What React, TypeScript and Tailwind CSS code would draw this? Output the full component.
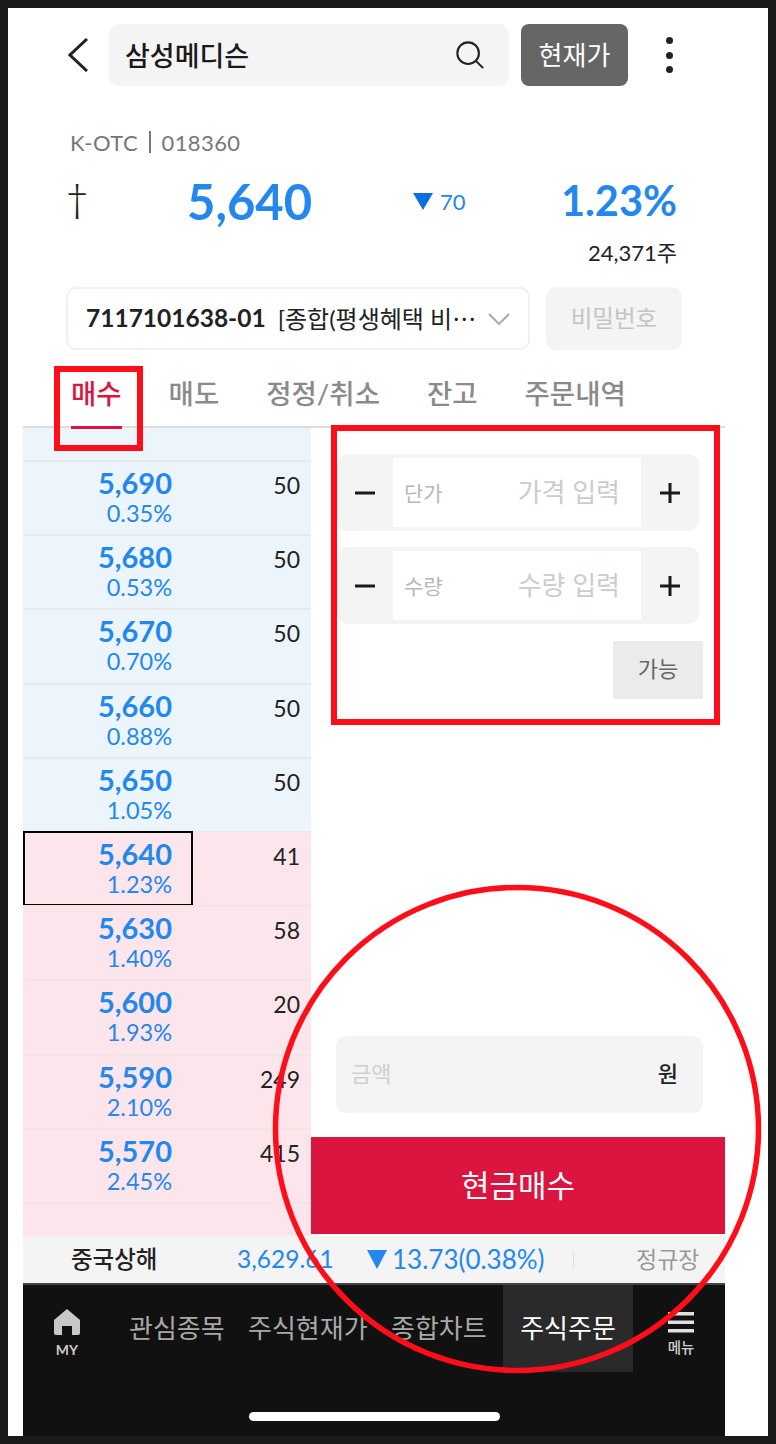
const KR = "font-['Lato','Noto_Sans_CJK_KR',sans-serif]";

const rows = [
  { p: '5,690', r: '0.35%', q: '50', up: true },
  { p: '5,680', r: '0.53%', q: '50', up: true },
  { p: '5,670', r: '0.70%', q: '50', up: true },
  { p: '5,660', r: '0.88%', q: '50', up: true },
  { p: '5,650', r: '1.05%', q: '50', up: true },
  { p: '5,640', r: '1.23%', q: '41', up: false, sel: true },
  { p: '5,630', r: '1.40%', q: '58', up: false },
  { p: '5,600', r: '1.93%', q: '20', up: false },
  { p: '5,590', r: '2.10%', q: '249', up: false },
  { p: '5,570', r: '2.45%', q: '415', up: false },
];

function Stepper({ label, hint }: { label: string; hint: string }) {
  return (
    <div className="flex h-[77px] w-[362px] items-center rounded-[10px] bg-[#f4f4f4] py-1">
      <div className="flex w-14 justify-center">
        <svg width="20" height="4" viewBox="0 0 20 4"><path d="M0 2h20" stroke="#1a1a1a" strokeWidth="3" /></svg>
      </div>
      <div className="flex h-full w-[248px] items-center justify-between bg-white pl-[11px] pr-[21px]">
        <span className="text-[21px] text-[#b8b8b8]">{label}</span>
        <span className="text-[26px] text-[#cccccc]">{hint}</span>
      </div>
      <div className="flex w-[58px] justify-center">
        <svg width="20" height="20" viewBox="0 0 20 20"><path d="M0 10h20M10 0v20" stroke="#1a1a1a" strokeWidth="3" /></svg>
      </div>
    </div>
  );
}

export default function App() {
  return (
    <div className={`relative h-[1444px] w-[776px] overflow-hidden bg-[#1a1a1a] p-2 ${KR}`}>
      <div className="flex h-full flex-col bg-white">
        {/* header */}
        <div className="mt-4 flex h-[62px] shrink-0 items-center pl-[60px]">
          <svg width="20" height="34" viewBox="0 0 20 34" fill="none" className="mr-[21px]">
            <path d="M19 1 2 17l17 16" stroke="#222" strokeWidth="3" />
          </svg>
          <div className="flex h-full w-[400px] items-center justify-between rounded-[10px] bg-[#f4f4f4] pl-4 pr-[24px]">
            <span className="text-[27px] font-medium leading-none text-[#1a1a1a]">삼성메디슨</span>
            <svg width="30" height="30" viewBox="0 0 32 32" fill="none">
              <circle cx="14" cy="14" r="11.5" stroke="#222" strokeWidth="2.2" />
              <path d="m22 22 8 8" stroke="#222" strokeWidth="2.2" />
            </svg>
          </div>
          <div className="ml-3 flex h-full w-[107px] items-center justify-center rounded-[8px] bg-[#666666] text-[26px] text-white">현재가</div>
          <div className="ml-[38px] flex h-[36px] flex-col justify-between">
            <span className="h-[7px] w-[7px] rounded-full bg-[#222]" />
            <span className="h-[7px] w-[7px] rounded-full bg-[#222]" />
            <span className="h-[7px] w-[7px] rounded-full bg-[#222]" />
          </div>
        </div>

        {/* symbol */}
        <div className="mt-[41px] flex h-[30px] items-center pl-[62px] text-[22px] tracking-[0.4px] text-[#777777]">
          K-OTC<span className="mx-[11px] h-[22px] w-[1.5px] bg-[#777]" />018360
        </div>
        <div className="mt-[14px] flex h-[60px] items-center pl-[55px] pr-[91px]">
          <span className="flex w-[124px] justify-start pl-[3px] font-['Open_Sans',sans-serif] text-[46px] font-light leading-none text-[#222]">†</span>
          <span className="w-[226px] text-[49px] font-bold leading-none text-[#2288ee]">5,640</span>
          <span className="flex items-center gap-[7px] text-[22px] text-[#2288ee]">
            <span className="h-0 w-0 border-x-[10px] border-t-[17px] border-x-transparent border-t-[#0a6fe0]" />70
          </span>
          <span className="ml-auto text-[41.5px] font-bold leading-none text-[#2288ee]">1.23%</span>
        </div>
        <div className="mt-[7px] flex h-[28px] items-center justify-end pr-[91px] text-[22px] text-[#222]">24,371주</div>

        {/* account */}
        <div className="mt-[21px] flex h-[63px] shrink-0 pl-[58px]">
          <div className="flex w-[464px] items-center rounded-[10px] border-2 border-[#f0f0f0] pl-[18px] pr-[18px]">
            <span className="text-[24.5px] font-bold leading-none text-[#222]">7117101638-01</span>
            <span className="ml-[12px] flex-1 whitespace-nowrap text-[24px] text-[#222]">[종합(평생혜택 비⋯</span>
            <svg width="22" height="12" viewBox="0 0 22 12" fill="none"><path d="m1 1 10 10 10-10" stroke="#aaa" strokeWidth="2" /></svg>
          </div>
          <div className="ml-4 flex w-[136px] items-center justify-center rounded-[10px] bg-[#f4f4f4] text-[23.5px] text-[#c4c4c4]">비밀번호</div>
        </div>

        {/* main */}
        <div className="ml-[15px] flex w-[702px] flex-1 flex-col">
          <div className="mt-[16px] flex h-[62px] shrink-0 items-start gap-[47px] border-b-2 border-[#dddddd] pl-[48px] pt-[8px] text-[27.5px] font-medium leading-[40px] text-[#8a8a8a]">
            <span className="relative h-[53px] text-[#dc1440]">매수<span className="absolute bottom-0 left-0 h-[3px] w-full translate-y-[2px] bg-[#dc1440]" /></span>
            <span>매도</span>
            <span>정정/취소</span>
            <span>잔고</span>
            <span>주문내역</span>
          </div>
          <div className="flex h-[808px] shrink-0">
            {/* book */}
            <div className="flex w-[288px] flex-col">
              <div className="h-[32px] bg-[#edf5fc]" />
              {rows.map((r) => (
                <div
                  key={r.p}
                  className={`flex h-[74.2px] border-t-2 ${r.up ? 'border-[#e6e8ea] bg-[#edf5fc]' : 'border-[#f3e4e7] bg-[#fde6eb]'}`}
                >
                  <div className={`flex w-[170px] flex-col items-end pt-[4px] ${r.sel ? '-mt-[2px] h-[75px] border-2 border-black pr-[19px]' : 'pr-[21px]'}`}>
                    <span className="text-[29px] font-bold leading-[34px] text-[#2288ee]">{r.p}</span>
                    <span className="text-[23.5px] leading-[27px] text-[#2288ee]">{r.r}</span>
                  </div>
                  <div className="flex-1 pr-[11px] pt-[8px] text-right text-[23px] leading-[30px] text-[#222]">{r.q}</div>
                </div>
              ))}
              <div className="flex-1 border-t-2 border-[#f3e4e7] bg-[#fde6eb]" />
            </div>
            {/* order */}
            <div className="flex w-[414px] flex-col">
              <div className="flex flex-col gap-4 pl-[26px] pt-[26px]">
                <Stepper label="단가" hint="가격 입력" />
                <Stepper label="수량" hint="수량 입력" />
              </div>
              <div className="mt-[17px] flex justify-end pr-[22px]">
                <div className="flex h-[58px] w-[90px] items-center justify-center rounded-[2px] bg-[#ebebeb] pb-1 text-[22px] text-[#666]">가능</div>
              </div>
              <div className="ml-[25px] mr-[22px] mt-auto flex h-[77px] items-center justify-between rounded-[10px] bg-[#f4f4f4] pb-[2px] pl-[15px] pr-[25px]">
                <span className="text-[22px] text-[#cfcfcf]">금액</span>
                <span className="text-[22px] font-medium text-[#222]">원</span>
              </div>
              <div className="mb-[2px] mt-[24px] flex h-[97px] items-center justify-center bg-[#dc1440] text-[31px] text-white">현금매수</div>
            </div>
          </div>

          {/* ticker */}
          <div className="flex h-[49px] shrink-0 items-center border-b-2 border-[#444] bg-[#f4f4f4] text-[24.5px]">
            <span className="ml-[48px] w-[166px] text-[23.5px] font-medium text-[#222]">중국상해</span>
            <span className="w-[130px] text-[#2288ee]">3,629.61</span>
            <span className="h-0 w-0 border-x-[10px] border-t-[19px] border-x-transparent border-t-[#2288ee]" />
            <span className="ml-[5px] w-[181px] text-[26px] text-[#2288ee]">13.73(0.38%)</span>
            <span className="h-[18px] w-px bg-[#ddd]" />
            <span className="ml-[62px] text-[23px] text-[#999]">정규장</span>
          </div>

          {/* nav */}
          <div className="relative flex-1 bg-[#111111]">
            <div className="flex h-[87px] items-stretch text-[26px] text-[#a8a8a8]">
              <div className="flex w-[88px] flex-col items-center pt-[24px]">
                <svg width="28" height="26" viewBox="0 0 28 26" fill="#c8c8c8">
                  <path d="M14 0 27 11v13a2 2 0 0 1-2 2h-6v-9H9v9H3a2 2 0 0 1-2-2V11z" />
                </svg>
                <span className="mt-[6px] text-[14px] font-bold leading-[18px] text-[#c8c8c8]">MY</span>
              </div>
              <span className="ml-[18px] flex w-[119px] items-center whitespace-nowrap">관심종목</span>
              <span className="flex w-[143px] items-center whitespace-nowrap">주식현재가</span>
              <span className="flex w-[112px] items-center whitespace-nowrap">종합차트</span>
              <span className="flex w-[130px] items-center justify-center whitespace-nowrap bg-[#2a2a2a] text-white">주식주문</span>
              <div className="flex flex-1 flex-col items-center pl-[4px] pt-[27px]">
                <svg width="26" height="21" viewBox="0 0 26 21" fill="#e0e0e0">
                  <rect width="26" height="3.5" y="0" /><rect width="26" height="3.5" y="8.5" /><rect width="26" height="3.5" y="17" />
                </svg>
                <span className="mt-[6px] text-[14.5px] font-medium leading-[18px] text-[#d0d0d0]">메뉴</span>
              </div>
            </div>
            <div className="mx-auto mt-[40px] h-[9px] w-[251px] rounded-full bg-white" />
          </div>
        </div>
      </div>

      {/* annotations */}
      <div className="absolute left-[54px] top-[366px] h-[85px] w-[89px] border-[6px] border-[#ff0d19]" />
      <div className="absolute left-[331px] top-[425px] h-[300px] w-[389px] border-[6px] border-[#ff0d19]" />
      <svg className="absolute left-[270px] top-[882px]" width="494" height="494" viewBox="0 0 494 494" fill="none">
        <circle cx="247" cy="247" r="241.5" stroke="#ff0d19" strokeWidth="5.5" />
      </svg>
    </div>
  );
}
